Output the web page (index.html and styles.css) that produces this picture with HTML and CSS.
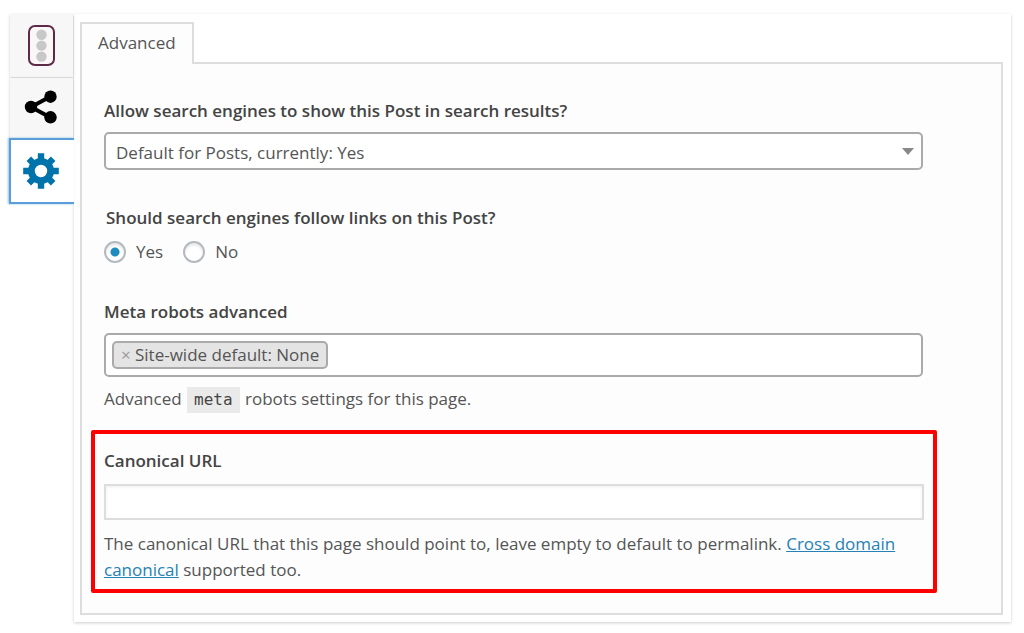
FILE: index.html
```html
<!DOCTYPE html>
<html lang="en">
<head>
<meta charset="utf-8">
<meta name="viewport" content="width=device-width, initial-scale=1">
<title>Advanced</title>
<link rel="stylesheet" href="styles.css">
</head>
<body>
<div class="metabox">
  <nav class="side-tabs" aria-label="Sections">
    <button class="side-tab side-tab-first" type="button" aria-label="Content optimization">
      <svg width="28" height="42" viewBox="0 0 28 42" aria-hidden="true">
        <rect x="1" y="1" width="25" height="39" rx="6" fill="#fbf7f9" stroke="#5d2a48" stroke-width="2"/>
        <g fill="#c8c8c8"><circle cx="13.500" cy="9.700" r="5.200"/><circle cx="13.500" cy="20.600" r="5.200"/><circle cx="13.500" cy="31.600" r="5.200"/></g>
      </svg>
    </button>
    <button class="side-tab" type="button" aria-label="Social">
      <svg width="34" height="34" viewBox="0 0 34 34" aria-hidden="true">
        <path d="M26.500 6.500 7 17l19.500 10.500" fill="none" stroke="#000" stroke-width="4"/>
        <circle cx="26.500" cy="6.700" r="6.200"/><circle cx="7" cy="17" r="6.200"/><circle cx="26.500" cy="27.300" r="6.200"/>
      </svg>
    </button>
    <button class="side-tab side-tab-active" type="button" aria-label="Advanced" aria-current="true">
      <svg width="36" height="36" viewBox="-18 -18 36 36" aria-hidden="true">
        <g fill="none" stroke="#0073aa">
          <circle r="9.600" stroke-width="6.800"/>
          <g stroke-width="6.400">
            <path d="M0-17.800V-11M0 17.800V11M-17.800 0H-11M17.800 0H11"/>
            <path d="M0-17.200V-11M0 17.200V11M-17.200 0H-11M17.200 0H11" transform="rotate(45)"/>
          </g>
        </g>
      </svg>
    </button>
  </nav>
  <main class="panel">
    <div class="tab-list" role="tablist">
      <button class="tab" type="button" role="tab" aria-selected="true" id="tab-advanced" aria-controls="advanced">Advanced</button>
    </div>
    <form class="content" id="advanced" role="tabpanel" aria-labelledby="tab-advanced">
      <div class="field">
        <label class="label" for="noindex">Allow search engines to show this Post in search results?</label>
        <div class="select-wrap">
          <select class="select" id="noindex">
            <option>Default for Posts, currently: Yes</option>
          </select>
          <svg class="arrow" width="12" height="7" viewBox="0 0 12 7" aria-hidden="true"><path d="M0 0h12L6 7z" fill="#888"/></svg>
        </div>
      </div>
      <fieldset class="field radios">
        <legend class="label legend">Should search engines follow links on this Post?</legend>
        <div class="radio-row">
          <label class="choice"><input class="radio" type="radio" name="follow" checked>Yes</label>
          <label class="choice"><input class="radio" type="radio" name="follow">No</label>
        </div>
      </fieldset>
      <div class="field field-robots">
        <label class="label" for="robots">Meta robots advanced</label>
        <div class="multi">
          <span class="chip"><button class="remove" type="button" aria-label="Remove Site-wide default: None">×</button>Site-wide default: None</span>
          <input class="multi-input" id="robots" type="text">
        </div>
        <p class="help">Advanced <code class="code">meta</code> robots settings for this page.</p>
      </div>
      <div class="highlight">
        <label class="label" for="canonical">Canonical URL</label>
        <input class="text-input" id="canonical" type="text">
        <p class="help help-canonical">The canonical URL that this page should point to, leave empty to default to permalink. <a class="link" href="#canonical">Cross domain canonical</a> supported too.</p>
      </div>
    </form>
  </main>
</div>
</body>
</html>
```
FILE: styles.css
```css
* {
  box-sizing: border-box;
}

body {
  margin: 0;
  background: #fff;
  color: #555;
  font-family: "Open Sans", "Noto Sans", sans-serif;
  font-size: 17px;
  line-height: 26px;
}

button,
input,
select {
  font: inherit;
  color: inherit;
}

.metabox {
  display: flex;
  align-items: stretch;
  padding: 14px 13px 11px 9px;
}

.side-tabs {
  display: flex;
  flex-direction: column;
  width: 65px;
  flex: none;
  z-index: 1;
}

.side-tab {
  display: flex;
  align-items: center;
  justify-content: center;
  height: 60px;
  margin: 0 1px;
  padding: 0 1px 2px 0;
  border: 0;
  background: #f7f7f7;
  box-shadow: 0 1px 3px rgba(0, 0, 0, 0.2);
}

.side-tab-first {
  height: 63px;
  margin-bottom: 1px;
  padding: 0;
}

.side-tab-active {
  height: 66px;
  margin: 0;
  padding: 0 4px 1px 0;
  border: 2px solid #5b9dd9;
  border-right: 0;
  background: #fff;
  box-shadow: -1px 0 2px rgba(30, 140, 190, 0.5);
}

.panel {
  flex: 1;
  min-width: 0;
  padding: 8px 8px 7px 6px;
  background: #fff;
  box-shadow: 0 1px 3px rgba(0, 0, 0, 0.2);
}

.tab-list {
  display: flex;
}

.tab {
  height: 42px;
  margin-bottom: -2px;
  padding: 0 16px 2px;
  border: 2px solid #ddd;
  border-bottom: 0;
  background: #fdfdfd;
  z-index: 1;
}

.content {
  padding: 35px 78px 20px 22px;
  border: 2px solid #ddd;
  background: #fdfdfd;
}

.field {
  margin: 0 0 36px;
}

.label {
  display: block;
  padding: 0;
  color: #444;
  font-weight: 600;
  line-height: 24px;
}

.select-wrap {
  position: relative;
  margin-top: 9px;
}

.select {
  display: block;
  width: 100%;
  height: 38px;
  padding: 3px 32px 0 10px;
  border: 2px solid #aaa;
  border-radius: 5px;
  background: #fff;
  appearance: none;
}

.arrow {
  position: absolute;
  right: 9px;
  top: 16px;
  pointer-events: none;
}

.radios {
  margin-bottom: 35px;
  padding: 0;
  border: 0;
}

.legend {
  padding-left: 2px;
}

.radio-row {
  display: flex;
  gap: 20px;
  padding-top: 9px;
}

.choice {
  display: flex;
  align-items: center;
  gap: 10px;
}

.radio {
  width: 22px;
  height: 22px;
  margin: 0;
  border: 2px solid #b4b9be;
  border-radius: 50%;
  background: #fff;
  box-shadow: inset 0 2px 3px rgba(0, 0, 0, 0.1);
  appearance: none;
}

.radio:checked {
  background: radial-gradient(circle, #1e8cbe 4px, #fff 5px);
}

.field-robots {
  margin-bottom: 17px;
}

.multi {
  display: flex;
  align-items: center;
  height: 44px;
  margin-top: 9px;
  padding: 0 6px;
  border: 2px solid #aaa;
  border-radius: 5px;
  background: #fff;
}

.chip {
  display: flex;
  align-items: center;
  height: 28px;
  padding: 0 7px;
  border: 2px solid #aaa;
  border-radius: 5px;
  background: #e4e4e4;
  white-space: nowrap;
}

.remove {
  width: 14px;
  padding: 0;
  border: 0;
  background: none;
  color: #999;
  text-align: left;
}

.multi-input {
  flex: 1;
  min-width: 0;
  border: 0;
  outline: 0;
  background: none;
}

.help {
  margin: 9px 0 0;
}

.help-canonical {
  margin-top: 11px;
}

.code {
  display: inline-block;
  margin: 0 1px;
  padding: 0 7px;
  background: #eaeaea;
  color: #444;
  font-family: "DejaVu Sans Mono", monospace;
  font-size: 16px;
}

.highlight {
  margin: 0 -14px 0 -13px;
  padding: 15px 9px 6px;
  border: 4px solid #f00;
  border-radius: 2px;
}

.text-input {
  display: block;
  width: 100%;
  height: 36px;
  margin-top: 11px;
  padding: 0 8px;
  border: 2px solid #ddd;
  background: #fff;
  box-shadow: inset 0 1px 3px rgba(0, 0, 0, 0.07);
}

.link {
  color: #2482b5;
  text-decoration-thickness: 1px;
}
```
